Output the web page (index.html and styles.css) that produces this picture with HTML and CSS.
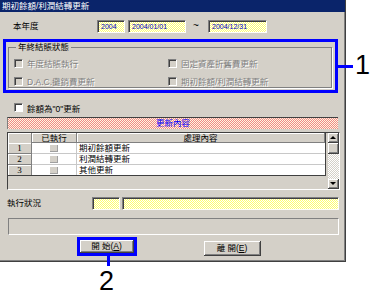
FILE: index.html
```html
<!DOCTYPE html>
<html lang="zh-Hant">
<head>
    <meta charset="UTF-8">
    <meta name="viewport" content="width=device-width, initial-scale=1.0">
    <title>期初餘額/利潤結轉更新</title>
    <link rel="stylesheet" href="styles.css">
</head>
<body>
    <div class="stage">
        <div class="window">
            <div class="titlebar">期初餘額/利潤結轉更新</div>
            <div class="client">
                <div class="year-row">
                    <span class="year-label">本年度</span>
                    <span class="field f-year">2004</span>
                    <span class="field f-from">2004/01/01</span>
                    <span class="tilde">~</span>
                    <span class="field f-to">2004/12/31</span>
                </div>

                <div class="mark group-mark">
                    <fieldset class="group">
                        <legend>年終結賬狀態</legend>
                        <div class="checks">
                            <label class="check disabled"><span class="box"></span>年度結賬執行</label>
                            <label class="check disabled"><span class="box"></span>固定資產折舊費更新</label>
                            <label class="check disabled"><span class="box"></span>D.A.C.攤銷費更新</label>
                            <label class="check disabled"><span class="box"></span>期初餘額/利潤結轉更新</label>
                        </div>
                    </fieldset>
                </div>

                <label class="check zero-check"><span class="box white"></span>餘額為&quot;0&quot;更新</label>

                <div class="band">更新內容</div>

                <div class="grid">
                    <div class="table">
                        <div class="trow head">
                            <div class="c-no"></div>
                            <div class="c-done">已執行</div>
                            <div class="c-name">處理內容</div>
                        </div>
                        <div class="trow">
                            <div class="c-no">1</div>
                            <div class="c-done"><span class="flag"></span></div>
                            <div class="c-name">期初餘額更新</div>
                        </div>
                        <div class="trow">
                            <div class="c-no">2</div>
                            <div class="c-done"><span class="flag"></span></div>
                            <div class="c-name">利潤結轉更新</div>
                        </div>
                        <div class="trow last">
                            <div class="c-no">3</div>
                            <div class="c-done"><span class="flag"></span></div>
                            <div class="c-name">其他更新</div>
                        </div>
                    </div>
                    <div class="scrollbar">
                        <div class="sb-btn"><span class="arrow up"></span></div>
                        <div class="sb-thumb"></div>
                        <div class="sb-track"></div>
                        <div class="sb-btn"><span class="arrow down"></span></div>
                    </div>
                </div>

                <div class="status-row">
                    <span class="status-label">執行狀況</span>
                    <span class="field f-step"></span>
                    <span class="field f-msg"></span>
                </div>

                <div class="statusbar"></div>

                <div class="buttons">
                    <div class="mark btn-mark">
                        <button class="btn start">開 始(<u>A</u>)</button>
                    </div>
                    <button class="btn leave">離 開(<u>E</u>)</button>
                </div>
            </div>
        </div>

        <div class="lead lead-1"></div>
        <div class="num num-1">1</div>
        <div class="lead lead-2"></div>
        <div class="num num-2">2</div>
    </div>
</body>
</html>
```
FILE: styles.css
```css
body {
    margin: 0;
    background: #fff;
    font-family: "Liberation Sans", "Noto Sans CJK TC", sans-serif;
    font-size: 8.5px;
    color: #000;
}
.stage {
    position: relative;
    width: 370px;
    height: 299px;
}
.window {
    width: 345px;
    height: 261px;
    background: #d4d0c8;
    border-right: 1px solid #404040;
    border-bottom: 1px solid #404040;
    box-shadow: inset -1px -1px #808080;
}
.titlebar {
    height: 12px;
    line-height: 13px;
    padding-left: 2px;
    background: #0a246a;
    color: #fff;
}
.client {
    padding-left: 7px;
}

/* shared bits */
.field {
    display: block;
    box-sizing: border-box;
    height: 13px;
    border: 1px solid;
    border-color: #808080 #fff #fff #808080;
    box-shadow: inset 1px 1px #404040;
    background: repeating-conic-gradient(#ffff70 0 25%, #fff 0 50%) 0 0 / 2px 2px;
    padding-left: 3px;
    font-size: 7px;
    line-height: 11px;
    color: #0000c0;
}
.mark {
    border: 3px solid #0000ff;
    box-sizing: border-box;
}
.check {
    display: flex;
    align-items: center;
    gap: 4px;
    height: 12px;
}
.box {
    box-sizing: border-box;
    width: 9px;
    height: 9px;
    border: 1px solid;
    border-color: #808080 #fff #fff #808080;
    box-shadow: inset 1px 1px #404040;
    background: #d4d0c8;
}
.box.white {
    background: #fff;
}
.disabled {
    color: #808080;
    text-shadow: 1px 1px #fff;
}

/* year */
.year-row {
    display: flex;
    padding-top: 8px;
    height: 13px;
}
.year-label {
    width: 84px;
    margin-left: 6px;
    line-height: 13px;
}
.f-year { width: 28px; margin-right: 3px; }
.f-from { width: 58px; }
.tilde {
    width: 20px;
    margin-right: 2px;
    text-align: center;
    line-height: 12px;
    font-size: 10px;
}
.f-to { width: 59px; }

/* year-end group */
.group-mark {
    margin: 6px 0 0 -4px;
    width: 335px;
    height: 54px;
}
.group {
    margin: 0 3px 0 2px;
    padding: 4px 0 0 5px;
    height: 46px;
    box-sizing: border-box;
    border: 1px solid #808080;
    box-shadow: 1px 1px #fff;
}
.group legend {
    padding: 0 2px;
    margin-left: 2px;
    line-height: 11px;
}
.checks {
    display: grid;
    grid-template-columns: 154px 1fr;
    row-gap: 6px;
}

.zero-check {
    margin: 9px 0 0 7px;
    height: 11px;
}

/* band */
.band {
    margin-top: 4px;
    width: 331px;
    height: 12px;
    box-sizing: border-box;
    border-top: 1px solid #404040;
    border-left: 1px solid #808080;
    background: repeating-conic-gradient(#f08888 0 25%, #fff8e0 0 50%) 0 0 / 2px 2px;
    color: #0000ff;
    text-align: center;
    line-height: 11px;
}

/* grid */
.grid {
    display: flex;
    margin-top: 3px;
    width: 333px;
    height: 58px;
    box-sizing: border-box;
    border: 1px solid;
    border-color: #404040 #fff #fff #404040;
}
.table {
    width: 318px;
    height: 43px;
    box-sizing: border-box;
    border-right: 1px solid #404040;
    border-bottom: 1px solid #404040;
    background: #fff;
}
.trow {
    display: flex;
    height: 10px;
    line-height: 10px;
    border-bottom: 1px solid #c8c8c8;
}
.trow.last {
    border-bottom: none;
}
.c-no {
    width: 24px;
    box-sizing: border-box;
    background: #d4d0c8;
    border-right: 1px solid #808080;
    box-shadow: inset 1px 1px #fff;
    text-align: center;
    font-family: "Liberation Serif", serif;
    font-size: 9px;
}
.trow .c-no {
    border-bottom: 1px solid #808080;
    height: 11px;
}
.trow.last .c-no {
    height: 10px;
    border-bottom: none;
}
.c-done {
    display: flex;
    justify-content: center;
    align-items: center;
    width: 45px;
    box-sizing: border-box;
    border-right: 1px solid #c8c8c8;
}
.c-name {
    flex: 1;
    padding-left: 2px;
}
.head {
    height: 10px;
    border-bottom: none;
}
.head div {
    background: #d4d0c8;
    border-right: 1px solid #808080;
    border-bottom: 1px solid #808080;
    box-shadow: inset 1px 1px #fff;
    box-sizing: border-box;
    height: 10px;
    line-height: 10px;
    text-align: center;
    padding: 0;
}
.flag {
    width: 7px;
    height: 6px;
    background: #d4d0c8;
    border-right: 1px solid #a0a0a0;
    border-bottom: 1px solid #a0a0a0;
}
.scrollbar {
    display: flex;
    flex-direction: column;
    margin-left: auto;
    width: 11px;
    background: repeating-conic-gradient(#fff 0 25%, #d4d0c8 0 50%) 0 0 / 2px 2px;
}
.sb-btn, .sb-thumb {
    display: flex;
    justify-content: center;
    align-items: center;
    height: 10px;
    box-sizing: border-box;
    background: #d4d0c8;
    border-right: 1px solid #404040;
    border-bottom: 1px solid #404040;
    box-shadow: inset 1px 1px #fff, inset -1px -1px #808080;
}
.sb-thumb {
    height: 11px;
}
.sb-track {
    flex: 1;
}
.arrow {
    width: 0;
    height: 0;
    border-left: 3px solid transparent;
    border-right: 3px solid transparent;
}
.arrow.up { border-bottom: 3px solid #000; }
.arrow.down { border-top: 3px solid #000; }

/* status */
.status-row {
    display: flex;
    margin-top: 7px;
    height: 13px;
}
.status-label {
    width: 85px;
    line-height: 13px;
}
.f-step { width: 28px; margin-right: 2px; }
.f-msg { width: 217px; }
.statusbar {
    margin: 8px 0 0 1px;
    width: 331px;
    height: 17px;
    box-sizing: border-box;
    border: 1px solid;
    border-color: #808080 #fff #fff #808080;
}

/* buttons */
.buttons {
    display: flex;
    align-items: flex-start;
    margin-top: 2px;
}
.btn-mark {
    margin-left: 70px;
    width: 60px;
    height: 19px;
}
.btn {
    display: block;
    box-sizing: border-box;
    margin: 0;
    padding: 0;
    font: inherit;
    background: #d4d0c8;
    border: none;
    border-right: 1px solid #404040;
    border-bottom: 1px solid #404040;
    box-shadow: inset 1px 1px #fff, inset -1px -1px #808080;
    line-height: 13px;
    text-align: center;
}
.btn u {
    text-decoration: underline;
}
.start {
    width: 54px;
    height: 13px;
}
.leave {
    margin: 4px 0 0 67px;
    width: 57px;
    height: 15px;
}

/* call-outs drawn on the shot */
.lead {
    position: absolute;
    background: #0000ff;
}
.lead-1 {
    left: 338px;
    top: 65px;
    width: 15px;
    height: 3px;
}
.lead-2 {
    left: 107px;
    top: 256px;
    width: 3px;
    height: 10px;
}
.num {
    position: absolute;
    font-size: 27px;
    line-height: 27px;
}
.num-1 {
    left: 355px;
    top: 52px;
}
.num-2 {
    left: 99px;
    top: 268px;
}
```
